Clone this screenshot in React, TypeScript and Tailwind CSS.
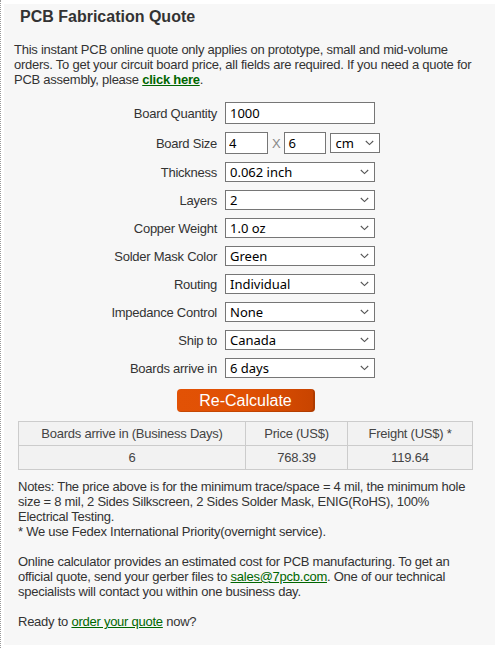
import React from 'react'

function Chevron() {
  return (
    <svg
      width="9"
      height="6"
      viewBox="0 0 9 6"
      className="pointer-events-none absolute right-[6px] top-1/2 -translate-y-1/2"
    >
      <path d="M0.8 1 L4.5 4.6 L8.2 1" fill="none" stroke="#555" strokeWidth="1.1" />
    </svg>
  )
}

function Select({ value, width = 'w-[150px]' }: { value: string; width?: string }) {
  return (
    <div className={`relative h-[20px] ${width}`}>
      <select
        defaultValue={value}
        className="h-full w-full appearance-none border border-[#767676] bg-white pl-[4px] font-['Noto_Sans',sans-serif] text-[13px] leading-[18px] tracking-normal text-black outline-none"
      >
        <option>{value}</option>
      </select>
      <Chevron />
    </div>
  )
}

function Row({ label, tall, children }: { label: string; tall?: boolean; children: React.ReactNode }) {
  return (
    <div className={`flex items-center ${tall ? 'h-[30px]' : 'h-[28px]'}`}>
      <div className="w-[213px] text-right">{label}</div>
      <div className="ml-[8px] flex items-center">{children}</div>
    </div>
  )
}

const rows: [string, string][] = [
  ['Thickness', '0.062 inch'],
  ['Layers', '2'],
  ['Copper Weight', '1.0 oz'],
  ['Solder Mask Color', 'Green'],
  ['Routing', 'Individual'],
  ['Impedance Control', 'None'],
  ['Ship to', 'Canada'],
  ['Boards arrive in', '6 days'],
]

const inputCls =
  "h-[22px] border border-[#767676] bg-white font-['Noto_Sans',sans-serif] text-[13px] tracking-normal text-black outline-none"

export default function App() {
  return (
    <div className="h-[648px] w-[495px] overflow-hidden border-l border-dotted border-[#9a9a9a] bg-white pl-[3px] pt-[4px] font-['Liberation_Sans',Arial,sans-serif] text-[13px] leading-[15px] tracking-[-0.25px] text-[#333]">
      <div className="h-[641px] bg-[#f7f7f7] pt-[4px]">
        <h1 className="pl-[16px] text-[16px] font-bold leading-[18px] tracking-normal text-[#333]">
          PCB Fabrication Quote
        </h1>

        <p className="mt-[16px] w-[474px] pl-[10px]">
          This instant PCB online quote only applies on prototype, small and mid-volume orders. To get your
          circuit board price, all fields are required. If you need a quote for PCB assembly, please{' '}
          <a href="#" className="font-bold text-[#006600] underline">
            click here
          </a>
          .
        </p>

        <div className="mt-[11px]">
          <Row label="Board Quantity" tall>
            <input defaultValue="1000" className={`${inputCls} w-[150px] pl-[4px]`} />
          </Row>
          <Row label="Board Size" tall>
            <input defaultValue="4" className={`${inputCls} w-[43px] pl-[3px]`} />
            <span className="mx-[4px] text-[#888]">X</span>
            <input defaultValue="6" className={`${inputCls} w-[42px] pl-[3px]`} />
            <div className="ml-[4px]">
              <Select value="cm" width="w-[50px]" />
            </div>
          </Row>
          {rows.map(([label, value]) => (
            <Row key={label} label={label}>
              <Select value={value} />
            </Row>
          ))}
        </div>

        <div className="ml-[14px] w-[455px]">
          <div className="mt-[7px] flex justify-center">
            <button
              type="button"
              className="h-[23px] w-[138px] rounded-[4px] bg-gradient-to-r from-[#e25205] via-[#e05004] to-[#c84400] text-[16px] leading-[23px] tracking-normal text-white shadow-[inset_-2px_-1px_0_rgba(0,0,0,0.12)]"
            >
              Re-Calculate
            </button>
          </div>

          <table className="mt-[9px] w-full border-collapse text-center text-[13px] text-[#444]">
            <tbody>
              <tr className="h-[24px] bg-[#f2f2f2]">
                <td className="w-[227px] border border-[#cccccc]">Boards arrive in (Business Days)</td>
                <td className="w-[102px] border border-[#cccccc]">Price (US$)</td>
                <td className="border border-[#cccccc]">Freight (US$) *</td>
              </tr>
              <tr className="h-[24px] bg-[#f2f2f2]">
                <td className="border border-[#cccccc]">6</td>
                <td className="border border-[#cccccc]">768.39</td>
                <td className="border border-[#cccccc]">119.64</td>
              </tr>
            </tbody>
          </table>

          <p className="mt-[9px] w-[452px]">
            Notes: The price above is for the minimum trace/space = 4 mil, the minimum hole size = 8 mil, 2 Sides
            Silkscreen, 2 Sides Solder Mask, ENIG(RoHS), 100% Electrical Testing.
            <br />* We use Fedex International Priority(overnight service).
            <br />
            <br />
            Online calculator provides an estimated cost for PCB manufacturing. To get an official quote, send
            your gerber files to{' '}
            <a href="#" className="text-[#006600] underline">
              sales@7pcb.com
            </a>
            . One of our technical specialists will contact you within one business day.
            <br />
            <br />
            Ready to{' '}
            <a href="#" className="text-[#006600] underline">
              order your quote
            </a>{' '}
            now?
          </p>
        </div>
      </div>
    </div>
  )
}
